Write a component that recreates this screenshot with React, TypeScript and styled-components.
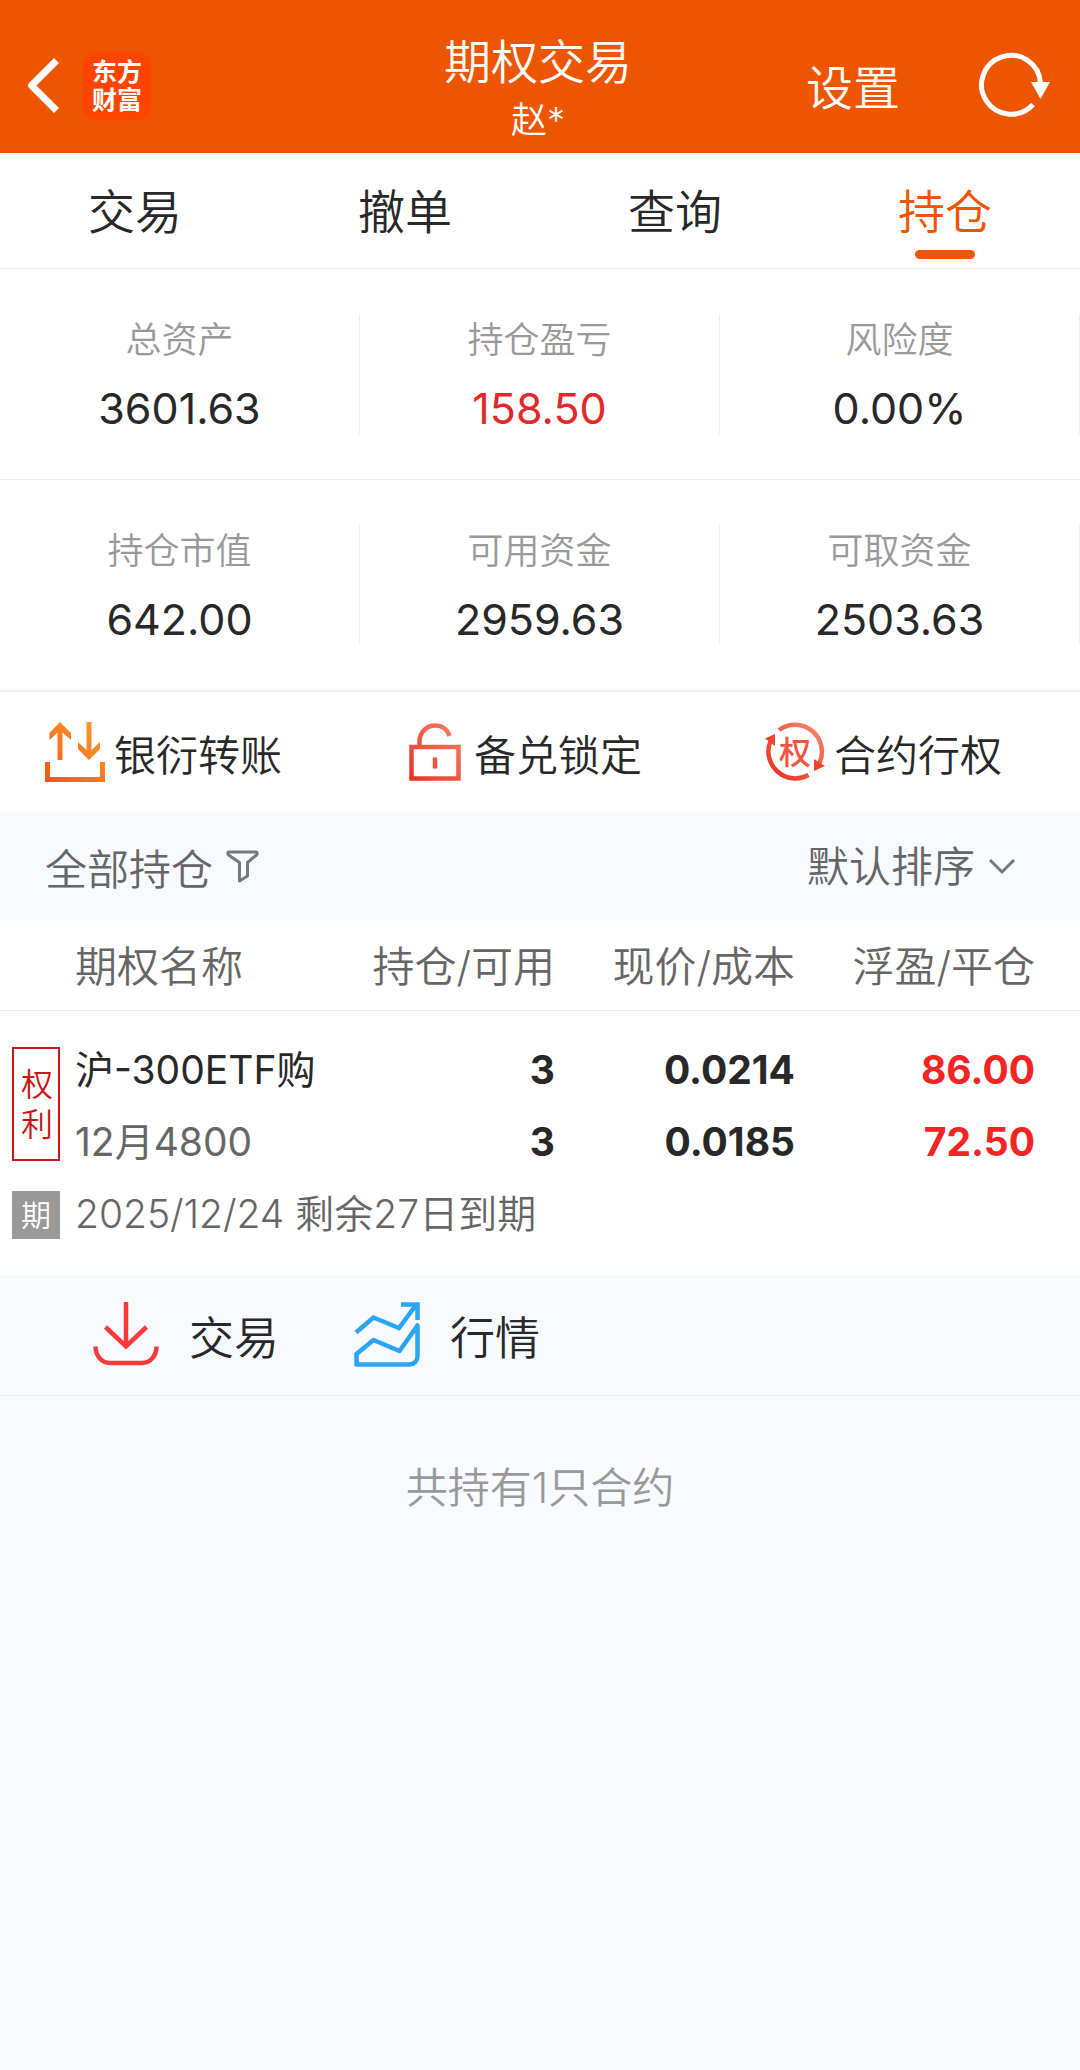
import React from 'react';
import styled, { createGlobalStyle } from 'styled-components';

const color = {
  brand: '#ee5500',
  ink: '#282828',
  grey: '#666666',
  muted: '#999999',
  red: '#e32828',
  gain: '#f22424',
  line: '#eeeeee',
  page: '#f7faff',
};

const GlobalStyle = createGlobalStyle`
  * { box-sizing: border-box; }
  body {
    margin: 0;
    background: ${color.page};
    color: ${color.ink};
    font-family: Inter, "Noto Sans CJK SC", sans-serif;
    font-weight: 350;
  }
  button, select {
    margin: 0;
    padding: 0;
    border: 0;
    background: none;
    color: inherit;
    font: inherit;
    cursor: pointer;
  }
  svg { display: block; flex: none; }
`;

const Header = styled.header`
  display: grid;
  grid-template-columns: 1fr auto 1fr;
  align-items: center;
  height: 153px;
  padding: 18px 28px 0 24px;
  background: ${color.brand};
  color: #fff;
`;

const HeaderStart = styled.div`
  display: flex;
  align-items: center;
  gap: 20px;
`;

const HeaderEnd = styled.div`
  display: flex;
  align-items: center;
  justify-content: flex-end;
  gap: 78px;
`;

const IconButton = styled.button`
  display: flex;
`;

const Logo = styled.span`
  display: flex;
  flex-direction: column;
  align-items: center;
  justify-content: center;
  width: 68px;
  height: 68px;
  border-radius: 14px;
  background: #ff4400;
  font-size: 25px;
  line-height: 28px;
  font-weight: 700;
`;

const Heading = styled.div`
  padding-top: 6px;
  text-align: center;
`;

const Title = styled.h1`
  margin: 0;
  font-size: 47px;
  line-height: 62px;
  font-weight: 350;
`;

const Account = styled.div`
  font-size: 36px;
  line-height: 54px;
`;

const SettingsButton = styled.button`
  padding-top: 5px;
  font-size: 47px;
  line-height: 62px;
`;

const Tabs = styled.nav`
  display: grid;
  grid-template-columns: repeat(4, 1fr);
  background: #fff;
  border-bottom: 1px solid ${color.line};
`;

const Tab = styled.a<{ $active?: boolean }>`
  display: flex;
  flex-direction: column;
  align-items: center;
  gap: 7px;
  padding: 28px 0 9px;
  color: ${(p) => (p.$active ? color.brand : color.ink)};
  font-size: 47px;
  line-height: 62px;
  text-decoration: none;

  &::after {
    content: "";
    width: 60px;
    height: 9px;
    border-radius: 5px;
    background: ${(p) => (p.$active ? color.brand : 'transparent')};
  }
`;

const Stats = styled.dl`
  display: grid;
  grid-template-columns: repeat(3, 1fr);
  margin: 0;
  padding: 45px 0;
  background: #fff;
  border-bottom: ${(p: { $edge: number }) => p.$edge}px solid ${color.line};
`;

const Stat = styled.div`
  display: flex;
  flex-direction: column;
  align-items: center;
  height: 120px;
  border-right: 1px solid ${color.line};
`;

const StatLabel = styled.dt`
  color: ${color.muted};
  font-size: 36px;
  line-height: 52px;
`;

const StatValue = styled.dd<{ $red?: boolean }>`
  margin: 12px 0 0;
  color: ${(p) => (p.$red ? color.red : color.ink)};
  font-size: 43px;
  font-weight: 400;
  line-height: 60px;
`;

const Shortcuts = styled.div`
  display: grid;
  grid-template-columns: repeat(3, 1fr);
  background: #fff;
`;

const Shortcut = styled.button`
  display: flex;
  align-items: center;
  gap: 9px;
  height: 120px;
  padding-left: 45px;
  font-size: 42px;
`;

const FilterBar = styled.div`
  display: flex;
  align-items: center;
  justify-content: space-between;
  height: 108px;
  padding: 0 62px 0 45px;
  color: ${color.grey};
  font-size: 42px;
`;

const FilterButton = styled.button`
  display: flex;
  align-items: center;
  gap: 12px;
`;

const SortField = styled.label`
  display: flex;
  align-items: center;
  gap: 10px;
`;

const SortSelect = styled.select`
  appearance: none;
  outline: none;
  height: 60px;
`;

const Holdings = styled.table`
  width: 100%;
  table-layout: fixed;
  border-spacing: 0;
  background: #fff;
`;

const TagCol = styled.col`
  width: 75px;
`;

const ValueCol = styled.col<{ $last?: boolean }>`
  width: ${(p) => (p.$last ? 285 : 240)}px;
`;

const HeadCell = styled.th<{ $align?: 'left' | 'right'; $last?: boolean }>`
  height: 91px;
  padding: 0 ${(p) => (p.$last ? 45 : 0)}px 4px 0;
  border-bottom: 1px solid ${color.line};
  color: ${color.grey};
  font-size: 42px;
  font-weight: 350;
  text-align: ${(p) => p.$align || 'right'};
  white-space: nowrap;
`;

const TagCell = styled.td<{ $top: number }>`
  padding: ${(p) => p.$top}px 0 0 12px;
  vertical-align: top;
`;

const RightsTag = styled.div`
  width: 48px;
  padding: 16px 7px 14px;
  border: 2px solid #cc1414;
  color: #cc1414;
  font-size: 32px;
  line-height: 40px;
  text-align: center;
  word-break: break-all;
`;

const ExpiryTag = styled.div`
  width: 48px;
  background: ${color.muted};
  color: #fff;
  font-size: 30px;
  line-height: 48px;
  text-align: center;
`;

const NameCell = styled.td`
  padding: 23px 0 0;
  font-size: 39px;
  font-weight: 400;
  line-height: 72px;
  white-space: nowrap;
`;

const Line = styled.div<{ $grey?: boolean }>`
  color: ${(p) => (p.$grey ? color.grey : 'inherit')};
`;

const ValueCell = styled.td<{ $gain?: boolean; $last?: boolean }>`
  padding: 23px ${(p) => (p.$last ? 45 : 0)}px 0 0;
  color: ${(p) => (p.$gain ? color.gain : color.ink)};
  font-size: 39px;
  font-weight: 700;
  line-height: 72px;
  text-align: right;
`;

const ExpiryCell = styled.td`
  padding: 0 0 25px;
  color: ${color.grey};
  font-size: 39px;
  line-height: 72px;
`;

const RowActions = styled.div`
  display: flex;
  gap: 75px;
  padding-left: 93px;
  border-bottom: 1px solid ${color.line};
`;

const RowAction = styled.button`
  display: flex;
  align-items: center;
  gap: 30px;
  height: 120px;
  font-size: 45px;
`;

const Summary = styled.p`
  margin: 0;
  padding: 62px 0;
  color: ${color.muted};
  font-size: 42px;
  line-height: 60px;
  text-align: center;
`;

const BackIcon = () => (
  <svg width="39" height="60" viewBox="0 0 39 60" fill="none" stroke="#fff" strokeWidth="7">
    <path d="M32.500 4.500 7.500 29.500l25 25" strokeLinejoin="round" />
  </svg>
);

const RefreshIcon = () => (
  <svg width="74" height="72" viewBox="0 0 74 72" fill="none">
    <path d="M62.500 33A29.500 29.500 0 1 0 55 54.500" stroke="#fff" strokeWidth="5" />
    <path d="M53 32h19L62.500 49z" fill="#fff" />
  </svg>
);

const TransferIcon = () => (
  <svg width="60" height="60" viewBox="0 0 60 60" fill="none">
    <defs>
      <linearGradient id="transfer" x1="0" y1="60" x2="60" y2="0" gradientUnits="userSpaceOnUse">
        <stop stopColor="#f4560c" />
        <stop offset="1" stopColor="#ffa033" />
      </linearGradient>
    </defs>
    <path
      fill="url(#transfer)"
      d="M15 0 26 11v7l-8.500-7.500V38h-5V10.500L4.500 18v-7zM41.500 0h5v28L55 20v7L44 38 33 27v-7l8.500 8zM0 40h5v15h50V40h5v20H0z"
    />
  </svg>
);

const LockIcon = () => (
  <svg width="60" height="60" viewBox="0 0 60 60" fill="none">
    <defs>
      <linearGradient id="lock" x1="4" y1="58" x2="56" y2="4" gradientUnits="userSpaceOnUse">
        <stop stopColor="#e83222" />
        <stop offset="1" stopColor="#fa8068" />
      </linearGradient>
    </defs>
    <g stroke="url(#lock)" strokeWidth="4.500">
      <path d="M6.500 25h47v31.500h-47zM14.500 24v-4.500c0-9 7-16 15.500-16 7 0 12.500 4 14.500 10.500M30 35.500v11" />
    </g>
  </svg>
);

const ExerciseIcon = () => (
  <svg width="60" height="60" viewBox="0 0 60 60" fill="none">
    <defs>
      <linearGradient id="exercise" x1="8" y1="58" x2="52" y2="4" gradientUnits="userSpaceOnUse">
        <stop stopColor="#e83222" />
        <stop offset="1" stopColor="#fa8068" />
      </linearGradient>
    </defs>
    <path
      d="M14 8A27 27 0 0 1 54.500 41M43.500 53A27 27 0 0 1 5.500 19"
      stroke="url(#exercise)"
      strokeWidth="4.500"
    />
    <path d="M0 16.500 10 12v12zM60 44 49 37v12z" fill="#ec4430" />
    <text
      x="30"
      y="42"
      textAnchor="middle"
      fontFamily="Noto Sans CJK SC, sans-serif"
      fontSize="32"
      fontWeight="500"
      fill="#f15440"
    >
      权
    </text>
  </svg>
);

const FunnelIcon = () => (
  <svg width="36" height="36" viewBox="0 0 36 36" fill="none" stroke="#777" strokeWidth="3">
    <path d="M4 4h27c1.500 0 1.500 2 .5 3L22.500 14.500V28l-8 5V14.500L3.500 7c-1-1-1-3 .5-3z" strokeLinejoin="round" />
  </svg>
);

const ChevronIcon = () => (
  <svg width="32" height="24" viewBox="0 0 32 24" fill="none" stroke="#777" strokeWidth="3">
    <path d="m4 6 12 12L28 6" />
  </svg>
);

const TradeIcon = () => (
  <svg width="66" height="66" viewBox="0 0 66 66" fill="none" stroke="#fa3a3a" strokeWidth="4.500">
    <path d="M33 0v44M12.500 25 33 44.500l20.500-19.500M2.500 44.500C2.500 53.500 8.500 61 17 61h32c8.500 0 14.500-7.500 14.500-16.500" />
  </svg>
);

const QuoteIcon = () => (
  <svg width="66" height="66" viewBox="0 0 66 66" fill="none" stroke="#2aa5f7" strokeWidth="4.500">
    <path d="M2 30.500 19.500 15.500 45 26 62 3" />
    <path d="M47 2.500h16.500V18" />
    <path d="M2.500 62.500V52l17-14L45.500 49 63.500 23.500V54.500c0 4.500-3.500 8-8 8z" strokeLinejoin="round" />
  </svg>
);

const tabs = ['交易', '撤单', '查询', '持仓'];

const assets = [
  [
    { label: '总资产', value: '3601.63' },
    { label: '持仓盈亏', value: '158.50', red: true },
    { label: '风险度', value: '0.00%' },
  ],
  [
    { label: '持仓市值', value: '642.00' },
    { label: '可用资金', value: '2959.63' },
    { label: '可取资金', value: '2503.63' },
  ],
];

const shortcuts = [
  { label: '银衍转账', Icon: TransferIcon },
  { label: '备兑锁定', Icon: LockIcon },
  { label: '合约行权', Icon: ExerciseIcon },
];

export default function App() {
  return (
    <>
      <GlobalStyle />
      <Header>
        <HeaderStart>
          <IconButton aria-label="返回">
            <BackIcon />
          </IconButton>
          <Logo>
            <span>东方</span>
            <span>财富</span>
          </Logo>
        </HeaderStart>
        <Heading>
          <Title>期权交易</Title>
          <Account>赵*</Account>
        </Heading>
        <HeaderEnd>
          <SettingsButton>设置</SettingsButton>
          <IconButton aria-label="刷新">
            <RefreshIcon />
          </IconButton>
        </HeaderEnd>
      </Header>

      <Tabs>
        {tabs.map((tab) => (
          <Tab key={tab} href="#" $active={tab === '持仓'}>
            {tab}
          </Tab>
        ))}
      </Tabs>

      <main>
        {assets.map((row, i) => (
          <Stats key={i} $edge={i + 1}>
            {row.map((s) => (
              <Stat key={s.label}>
                <StatLabel>{s.label}</StatLabel>
                <StatValue $red={'red' in s}>{s.value}</StatValue>
              </Stat>
            ))}
          </Stats>
        ))}

        <Shortcuts>
          {shortcuts.map(({ label, Icon }) => (
            <Shortcut key={label}>
              <Icon />
              {label}
            </Shortcut>
          ))}
        </Shortcuts>

        <FilterBar>
          <FilterButton>
            全部持仓
            <FunnelIcon />
          </FilterButton>
          <SortField>
            <SortSelect aria-label="排序" defaultValue="default">
              <option value="default">默认排序</option>
            </SortSelect>
            <ChevronIcon />
          </SortField>
        </FilterBar>

        <Holdings>
          <colgroup>
            <TagCol />
            <col />
            <ValueCol />
            <ValueCol />
            <ValueCol $last />
          </colgroup>
          <thead>
            <tr>
              <HeadCell />
              <HeadCell $align="left">期权名称</HeadCell>
              <HeadCell>持仓/可用</HeadCell>
              <HeadCell>现价/成本</HeadCell>
              <HeadCell $last>浮盈/平仓</HeadCell>
            </tr>
          </thead>
          <tbody>
            <tr>
              <TagCell $top={36}>
                <RightsTag>权利</RightsTag>
              </TagCell>
              <NameCell>
                <Line>沪-300ETF购</Line>
                <Line $grey>12月4800</Line>
              </NameCell>
              <ValueCell>
                <Line>3</Line>
                <Line>3</Line>
              </ValueCell>
              <ValueCell>
                <Line>0.0214</Line>
                <Line>0.0185</Line>
              </ValueCell>
              <ValueCell $gain $last>
                <Line>86.00</Line>
                <Line>72.50</Line>
              </ValueCell>
            </tr>
            <tr>
              <TagCell $top={13}>
                <ExpiryTag>期</ExpiryTag>
              </TagCell>
              <ExpiryCell colSpan={4}>2025/12/24 剩余27日到期</ExpiryCell>
            </tr>
          </tbody>
        </Holdings>

        <RowActions>
          <RowAction>
            <TradeIcon />
            交易
          </RowAction>
          <RowAction>
            <QuoteIcon />
            行情
          </RowAction>
        </RowActions>

        <Summary>共持有1只合约</Summary>
      </main>
    </>
  );
}
